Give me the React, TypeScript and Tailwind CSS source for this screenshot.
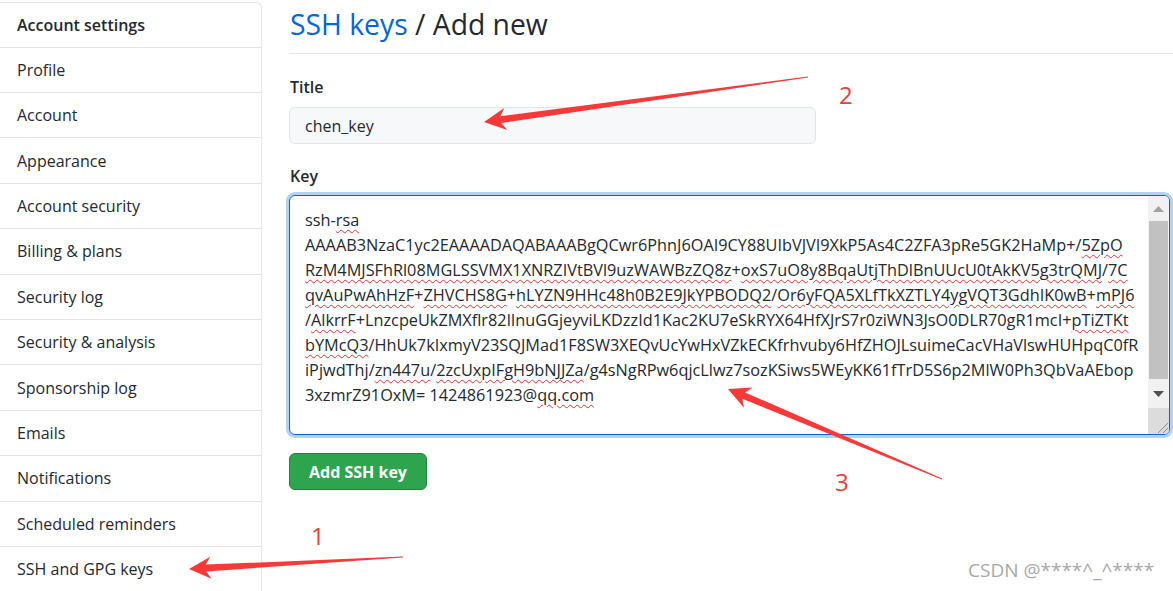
type Seg = [string, boolean];

const menu = [
  "Profile",
  "Account",
  "Appearance",
  "Account security",
  "Billing & plans",
  "Security log",
  "Security & analysis",
  "Sponsorship log",
  "Emails",
  "Notifications",
  "Scheduled reminders",
  "SSH and GPG keys",
];

const keyLines: Seg[][] = [
  [["ssh-", false], ["rsa", true]],
  [["AAAAB3NzaC1yc2EAAAADAQABAAABgQCwr6PhnJ6OAI9CY88UIbVJVI9XkP5As4C2ZFA3pRe5GK2HaMp+/", false], ["5ZpO", true]],
  [["RzM4MJSFhRl08MGLSSVMX1XNRZIVtBVl9uzWAWBzZQ8z", true], ["+", false], ["oxS7uO8y8BqaUtjThDlBnUUcU0tAkKV5g3trQMJ", true], ["/", false], ["7C", true]],
  [["qvAuPwAhHzF", true], ["+", false], ["ZHVCHS8G", true], ["+", false], ["hLYZN9HHc48h0B2E9JkYPBODQ2", true], ["/", false], ["Or6yFQA5XLfTkXZTLY4ygVQT3GdhIK0wB", true], ["+", false], ["mPJ6", true]],
  [["/", false], ["AlkrrF", true], ["+LnzcpeUkZMXflr82lInuGGjeyviLKDzzId1Kac2KU7eSkRYX64HfXJrS7r0ziWN3JsO0DLR70gR1mcI+", false], ["pTiZTKt", true]],
  [["bYMcQ3", true], ["/HhUk7kIxmyV23SQJMad1F8SW3XEQvUcYwHxVZkECKfrhvuby6HfZHOJLsuimeCacVHaVlswHUHpqC0fR", false]],
  [["iPjwdThj/", false], ["zn447u", true], ["/", false], ["2zcUxpIFgH9bNJJZa", true], ["/g4sNgRPw6qjcLlwz7sozKSiws5WEyKK61fTrD5S6p2MlW0Ph3QbVaAEbop", false]],
  [["3xzmrZ91OxM= 1424861923@", false], ["qq.com", true]],
];

// tapered annotation arrow, tail -> tip
function arrow(tx: number, ty: number, px: number, py: number) {
  const head = 22, hw = 11, sw = 7;
  const dx = px - tx, dy = py - ty;
  const len = Math.hypot(dx, dy);
  const ux = dx / len, uy = dy / len;
  const nx = -uy, ny = ux;
  const bx = px - ux * head, by = py - uy * head;
  const jx = px - ux * (head - 5), jy = py - uy * (head - 5);
  const pts = [
    [tx + nx * 0.4, ty + ny * 0.4],
    [jx + (nx * sw) / 2, jy + (ny * sw) / 2],
    [bx + nx * hw, by + ny * hw],
    [px, py],
    [bx - nx * hw, by - ny * hw],
    [jx - (nx * sw) / 2, jy - (ny * sw) / 2],
    [tx - nx * 0.4, ty - ny * 0.4],
  ];
  return pts.map((p) => p[0].toFixed(1) + "," + p[1].toFixed(1)).join(" ");
}

function Scrollbar() {
  return (
    <div className="flex w-[21px] shrink-0 flex-col bg-[#f1f1f1]">
      <div className="flex h-[25px] items-center justify-center">
        <svg width="11" height="6" viewBox="0 0 11 6">
          <path d="M5.5 0 L11 6 L0 6 Z" fill="#a3a3a3" />
        </svg>
      </div>
      <div className="mx-px h-[158px] bg-[#c1c1c1]" />
      <div className="flex h-[29px] items-center justify-center">
        <svg width="11" height="6" viewBox="0 0 11 6">
          <path d="M0 0 L11 0 L5.5 6 Z" fill="#505050" />
        </svg>
      </div>
      <div className="relative flex-1 bg-[#dcdcdc]">
        <svg className="absolute bottom-0 right-0" width="14" height="14" viewBox="0 0 14 14">
          <path d="M13 3 L3 13 M13 8 L8 13" stroke="#8a8a8a" strokeWidth="1" />
        </svg>
      </div>
    </div>
  );
}

export default function App() {
  return (
    <div className="relative h-[591px] w-[1173px] overflow-hidden bg-white font-['Open_Sans',sans-serif] text-[#24292e]">
      <div className="flex">
        <aside className="-ml-px mt-[2px] w-[263px] shrink-0 rounded-tr-md border border-b-0 border-[#e1e4e8]">
          <div className="flex h-[44.6px] items-center border-b border-[#e1e4e8] pl-[17px] text-[16px] font-semibold">
            Account settings
          </div>
          {menu.map((m) => (
            <div key={m} className="flex h-[45.4px] items-center border-b border-[#e1e4e8] pl-[17px] text-[16px]">
              {m}
            </div>
          ))}
        </aside>

        <main className="ml-[27px] flex-1">
          <div className="h-[54px] border-b border-[#e1e4e8] pl-px pt-[5px] text-[28.3px] leading-[38px]">
            <span className="text-[#0366d6]">SSH keys</span> / Add new
          </div>

          <div className="mt-[22px] pl-px text-[16px] font-semibold leading-[22px]">Title</div>
          <div className="mt-[9px] flex h-[37px] w-[527px] items-center rounded-md border border-[#e1e4e8] bg-[#f6f8fa] px-[15px] pt-px text-[16px]">
            chen_key
          </div>

          <div className="mt-[21px] pl-px text-[16px] font-semibold leading-[22px]">Key</div>
          <div className="mt-[8px] flex h-[240px] w-[881px] overflow-hidden rounded-md border border-[#0366d6] shadow-[0_0_0_3px_rgba(3,102,214,0.3)]">
            <div className="flex-1 overflow-hidden pl-[15px] pt-[12px] text-[16.3px] leading-[25px]">
              {keyLines.map((line, i) => (
                <div key={i} className="whitespace-nowrap">
                  {line.map(([t, u], j) =>
                    u ? (
                      <span key={j} className="underline decoration-[#e83030] decoration-wavy decoration-1 underline-offset-[3px]">
                        {t}
                      </span>
                    ) : (
                      <span key={j}>{t}</span>
                    ),
                  )}
                </div>
              ))}
            </div>
            <Scrollbar />
          </div>

          <button className="mt-[18px] flex h-[37px] w-[138px] items-center justify-center rounded-md border border-[#22863a] bg-[#2ea44f] text-[16px] font-bold text-white">
            Add SSH key
          </button>
        </main>
      </div>

      <svg className="pointer-events-none absolute inset-0" width="1173" height="591">
        <polygon points={arrow(403, 557, 189, 569)} fill="#f93838" />
        <polygon points={arrow(808, 77, 484, 122)} fill="#f93838" />
        <polygon points={arrow(942, 479, 728, 389)} fill="#f93838" />
      </svg>

      <span className="absolute left-[311px] top-[521px] text-[24px] leading-[30px] text-[#f23b3b]">1</span>
      <span className="absolute left-[839px] top-[80px] text-[24px] leading-[30px] text-[#f23b3b]">2</span>
      <span className="absolute left-[835px] top-[467px] text-[24px] leading-[30px] text-[#f23b3b]">3</span>

      <span className="absolute left-[968px] top-[557px] text-[19px] leading-[26px] text-[#a8a8a8]">CSDN @****^_^****</span>
    </div>
  );
}
